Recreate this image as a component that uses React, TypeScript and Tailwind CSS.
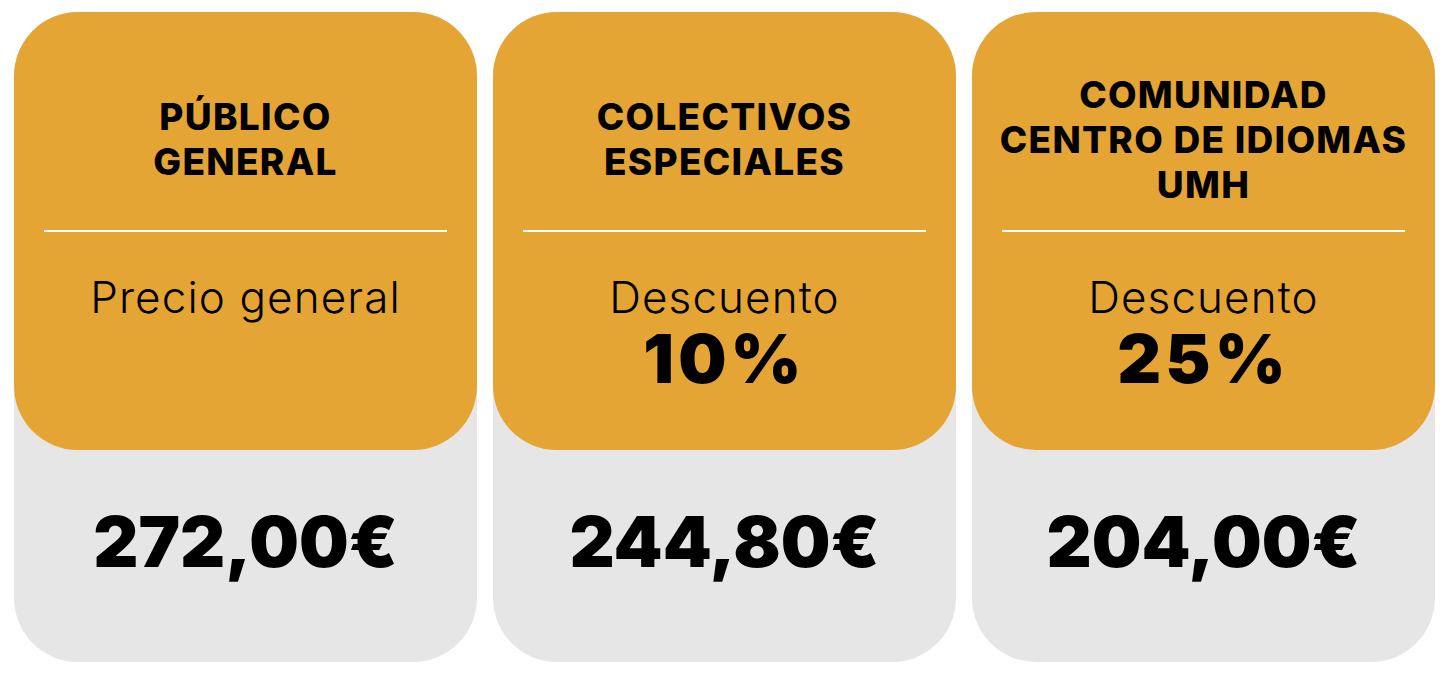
import React from "react";

type Plan = {
  title: string[];
  label: string;
  discount?: string;
  price: string;
};

const plans: Plan[] = [
  { title: ["PÚBLICO", "GENERAL"], label: "Precio general", price: "272,00€" },
  {
    title: ["COLECTIVOS", "ESPECIALES"],
    label: "Descuento",
    discount: "10%",
    price: "244,80€",
  },
  {
    title: ["COMUNIDAD", "CENTRO DE IDIOMAS", "UMH"],
    label: "Descuento",
    discount: "25%",
    price: "204,00€",
  },
];

function PriceCard({ plan }: { plan: Plan }) {
  return (
    <div className="flex h-[650px] w-[463px] flex-col rounded-[64px] bg-[#e6e6e6]">
      <div className="flex h-[438px] flex-col rounded-[64px] bg-[#e5a535]">
        <div className="mt-[36px] flex h-[182px] flex-col items-center justify-center whitespace-nowrap text-center text-[37px] font-extrabold leading-[45px] tracking-[0.035em] text-black">
          {plan.title.map((t) => (
            <span key={t}>{t}</span>
          ))}
        </div>
        <div className="mx-[30px] h-[2px] bg-white" />
        <div className="flex flex-col items-center pt-[40px] text-black">
          <span className="text-[44px] font-light leading-[51px] tracking-[0.025em]">
            {plan.label}
          </span>
          {plan.discount && (
            <span className="text-[68px] font-black leading-[70px] tracking-[0.06em]">
              {plan.discount}
            </span>
          )}
        </div>
      </div>
      <div className="flex flex-1 items-center justify-center pb-[28px]">
        <span className="text-[70px] font-black leading-none text-black">
          {plan.price}
        </span>
      </div>
    </div>
  );
}

export default function App() {
  return (
    <div className="flex min-h-[675px] w-[1447px] gap-4 bg-white pl-[14px] pt-3 font-['Inter',sans-serif]">
      {plans.map((p) => (
        <PriceCard key={p.price} plan={p} />
      ))}
    </div>
  );
}
